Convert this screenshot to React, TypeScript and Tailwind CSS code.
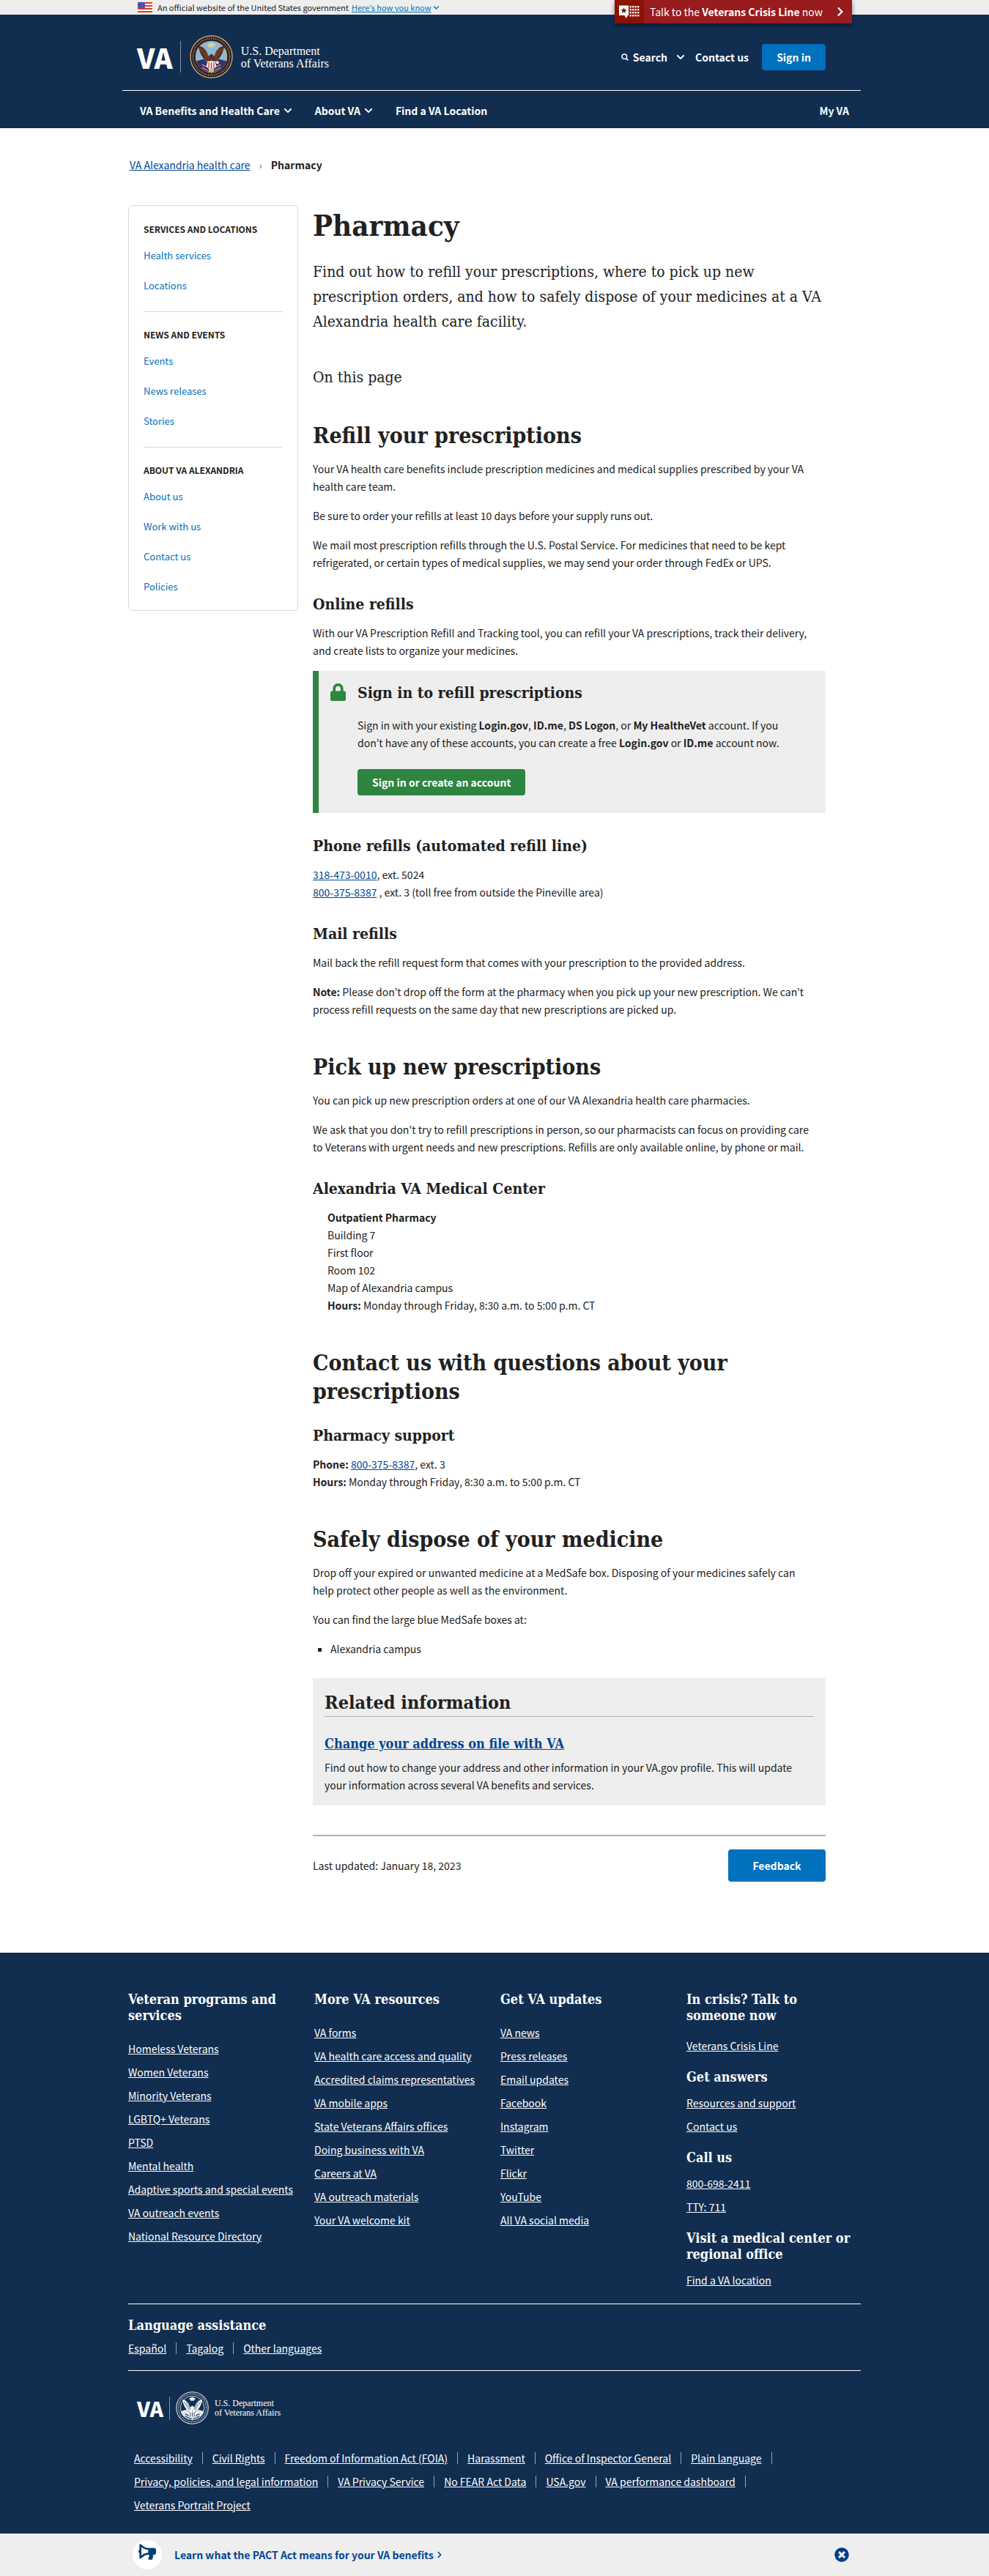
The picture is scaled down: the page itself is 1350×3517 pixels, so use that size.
import type { ReactNode } from "react";
import { FaLock, FaBullhorn, FaTimesCircle, FaChevronRight, FaChevronDown } from "react-icons/fa";

const SLAB = "font-['DejaVu_Serif_Condensed','DejaVu_Serif',serif]";

function P({ children, className = "" }: { children: ReactNode; className?: string }) {
  return <p className={`pr-4 text-sm leading-6 ${className}`}>{children}</p>;
}

function H2({ children }: { children: ReactNode }) {
  return (
    <h2 className={`mt-[47px] mb-[14px] text-[30px] leading-[39px] font-bold text-[#212121] ${SLAB}`}>
      {children}
    </h2>
  );
}

function H3({ children, tight = false }: { children: ReactNode; tight?: boolean }) {
  return (
    <h3
      className={`${tight ? "mt-7" : "mt-8"} mb-[14px] text-[21px] leading-[26px] font-bold text-[#212121] ${SLAB}`}
    >
      {children}
    </h3>
  );
}

function BodyLink({ children }: { children: ReactNode }) {
  return (
    <a href="#" className="text-[#004795] underline">
      {children}
    </a>
  );
}

function Flag() {
  return (
    <svg viewBox="0 0 20 14" className="h-[14px] w-5" aria-hidden="true">
      <rect width="20" height="14" fill="#fff" />
      {[0, 4, 8, 12].map((y) => (
        <rect key={y} y={y} width="20" height="2" fill="#db3e1f" />
      ))}
      <rect width="10" height="8" fill="#3b3fae" />
      {[1.5, 4, 6.5].map((y) =>
        [1.5, 4, 6.5, 9].map((x) => <circle key={`${x}-${y}`} cx={x} cy={y} r="0.6" fill="#b9bdf0" />)
      )}
    </svg>
  );
}

function Seal({ mono = false, className }: { mono?: boolean; className: string }) {
  const navy = "#112e51";
  const gold = mono ? "#dfe6ee" : "#d9a066";
  return (
    <svg viewBox="0 0 60 60" className={className} aria-hidden="true">
      <circle cx="30" cy="30" r="29" fill={mono ? navy : "#1b1c2b"} stroke={gold} strokeWidth="1.4" />
      <circle
        cx="30"
        cy="30"
        r="25.4"
        fill="none"
        stroke={mono ? "#b9c5d4" : "#a98158"}
        strokeWidth="2.6"
        strokeDasharray="1.2 1.5"
      />
      <circle cx="30" cy="30" r="21.6" fill={mono ? navy : "#8fb9d8"} stroke={gold} strokeWidth="1.2" />
      <path d="M9 36 L20 33 L27 41 L26 51 C18 50 11 44 9 36Z" fill={mono ? "#dfe6ee" : "#2c3565"} />
      <path d="M51 36 L40 33 L33 41 L34 51 C42 50 49 44 51 36Z" fill={mono ? "#dfe6ee" : "#2c3565"} />
      <path
        d="M17 41 L26 45 M17 45 L25 49 M43 41 L34 45 M43 45 L35 49"
        stroke={mono ? navy : "#e0707a"}
        strokeWidth="1.6"
      />
      <path
        d="M12 15 C14 27 19 35 28 38 L30 34 L32 38 C41 35 46 27 48 15 C45 15 40 17 37 22 L34 29 L30 26 L26 29 L23 22 C20 17 15 15 12 15Z"
        fill={mono ? "#fff" : "#5b2f1f"}
      />
      <path
        d="M15 19 L25 34 M19 19 L27 33 M45 19 L35 34 M41 19 L33 33"
        stroke={mono ? navy : "#8d5433"}
        strokeWidth="1"
      />
      <path d="M25 36 L35 36 L37 43 L30 51 L23 43Z" fill={mono ? "#fff" : "#f0ebe6"} />
      <path d="M26.5 38 V46 M30 38 V50 M33.5 38 V46" stroke={mono ? navy : "#c5313a"} strokeWidth="1.2" />
      <path d="M28 46 L30 54 L33 46Z" fill={mono ? "#dfe6ee" : "#e0b35d"} />
      <path d="M24 13 L30 10 L36 13 L33 17 H27Z" fill={mono ? "#dfe6ee" : "#cfd39a"} />
      <circle cx="38.5" cy="38" r="2" fill="#fff" />
    </svg>
  );
}

function CrisisIcon() {
  return (
    <svg viewBox="0 0 29 18" className="h-[18px] w-[29px]" aria-hidden="true">
      <path d="M1 0.5 H14 V14 H13 L10.5 18 L8.5 14 H1 Z" fill="#fff" />
      <path
        d="M7.5 3 L8.7 6 H11.8 L9.3 8 L10.2 11 L7.5 9.2 L4.8 11 L5.7 8 L3.2 6 H6.3 Z"
        fill="#7a1206"
      />
      {[1, 5, 9, 13].map((y) =>
        [15.5, 19, 22.5, 26].map((x) => (
          <rect key={`${x}-${y}`} x={x} y={y} width="2.4" height="2.4" rx="0.6" fill="#fff" />
        ))
      )}
    </svg>
  );
}

function SearchIcon() {
  return (
    <svg viewBox="0 0 10 10" className="h-[10px] w-[10px]" fill="none" stroke="currentColor" aria-hidden="true">
      <circle cx="4.3" cy="4.3" r="3.3" strokeWidth="1.5" />
      <path d="M6.8 6.8 L9.4 9.4" strokeWidth="1.7" />
    </svg>
  );
}

const sideGroups = [
  { title: "Services and locations", links: ["Health services", "Locations"] },
  { title: "News and events", links: ["Events", "News releases", "Stories"] },
  { title: "About VA Alexandria", links: ["About us", "Work with us", "Contact us", "Policies"] },
];

const footerCols = [
  {
    title: "Veteran programs and services",
    links: [
      "Homeless Veterans",
      "Women Veterans",
      "Minority Veterans",
      "LGBTQ+ Veterans",
      "PTSD",
      "Mental health",
      "Adaptive sports and special events",
      "VA outreach events",
      "National Resource Directory",
    ],
  },
  {
    title: "More VA resources",
    links: [
      "VA forms",
      "VA health care access and quality",
      "Accredited claims representatives",
      "VA mobile apps",
      "State Veterans Affairs offices",
      "Doing business with VA",
      "Careers at VA",
      "VA outreach materials",
      "Your VA welcome kit",
    ],
  },
  {
    title: "Get VA updates",
    links: [
      "VA news",
      "Press releases",
      "Email updates",
      "Facebook",
      "Instagram",
      "Twitter",
      "Flickr",
      "YouTube",
      "All VA social media",
    ],
  },
];

const contactGroups = [
  { title: "Get answers", links: ["Resources and support", "Contact us"] },
  { title: "Call us", links: ["800-698-2411", "TTY: 711"] },
  { title: "Visit a medical center or regional office", links: ["Find a VA location"] },
];

const languages = ["Español", "Tagalog", "Other languages"];

const legal = [
  "Accessibility",
  "Civil Rights",
  "Freedom of Information Act (FOIA)",
  "Harassment",
  "Office of Inspector General",
  "Plain language",
  "Privacy, policies, and legal information",
  "VA Privacy Service",
  "No FEAR Act Data",
  "USA.gov",
  "VA performance dashboard",
  "Veterans Portrait Project",
];

function FooterHeading({ children }: { children: ReactNode }) {
  return <h2 className={`pr-2 text-[18px] leading-[22px] font-bold text-white ${SLAB}`}>{children}</h2>;
}

function FooterLinks({ links }: { links: string[] }) {
  return (
    <ul className="flex flex-col gap-2">
      {links.map((l) => (
        <li key={l} className="text-sm leading-6 whitespace-nowrap">
          <a href="#" className="underline">
            {l}
          </a>
        </li>
      ))}
    </ul>
  );
}

function PipeList({ links }: { links: string[] }) {
  return (
    <ul className="flex flex-wrap gap-y-2">
      {links.map((l, i) => (
        <li key={l} className="flex items-center text-sm leading-6">
          <a href="#" className="underline">
            {l}
          </a>
          {i < links.length - 1 && <span className="mx-[13px] h-4 w-px bg-[#8ba6ca]" />}
        </li>
      ))}
    </ul>
  );
}

export default function App() {
  return (
    <div className="min-h-screen bg-white font-['Noto_Sans_CJK_KR',sans-serif] text-[#212121]">
      <div className="bg-[#eeeeee]">
        <div className="relative mx-auto flex h-5 max-w-[1000px] items-center pl-[13px] text-[11px] leading-5">
          <Flag />
          <span className="ml-[7px]">An official website of the United States government</span>
          <button className="ml-1 flex items-center text-[#0071bc] underline">
            Here’s how you know <FaChevronDown className="ml-[2px] h-[9px] w-[9px]" />
          </button>
          <a
            href="#"
            className="absolute top-0 right-3 flex h-8 items-center bg-[#981b1e] text-sm text-white shadow-[0_3px_6px_rgba(0,0,0,0.45)]"
          >
            <span className="flex h-full w-10 items-center justify-center bg-[#8b1303]">
              <CrisisIcon />
            </span>
            <span className="ml-2">
              Talk to the <b>Veterans Crisis Line</b> now
            </span>
            <FaChevronRight className="mr-[10px] ml-[18px] h-[14px] w-3" />
          </a>
        </div>
      </div>

      <header className="bg-[#112e51] text-white">
        <div className="mx-auto max-w-[1000px]">
          <div className="-ml-2 border-b border-white">
            <div className="flex h-[103px] items-center justify-between pt-3 pr-12 pl-5">
              <a href="#" className="flex items-center">
                <span className="text-[38px] leading-[44px] font-black">VA</span>
                <span className="ml-[10px] h-[43px] w-px bg-[#7d93b0]" />
                <Seal className="ml-[12px] h-[59px] w-[59px]" />
                <span className="ml-[11px] font-['Liberation_Serif',serif] text-[16px] leading-[17px]">
                  U.S. Department
                  <br />
                  of Veterans Affairs
                </span>
              </a>
              <div className="flex items-center text-sm font-bold">
                <button className="flex items-center gap-[6px]">
                  <SearchIcon />
                  <span>Search</span>
                  <FaChevronDown className="ml-[6px] h-3 w-3" />
                </button>
                <a href="#" className="ml-[14px]">
                  Contact us
                </a>
                <button className="ml-[18px] h-9 w-[87px] rounded bg-[#0071bc]">Sign in</button>
              </div>
            </div>
          </div>
          <nav className="flex h-[51px] items-center px-4 pt-[2px] text-sm font-bold">
            <button className="flex items-center gap-[5px]">
              VA Benefits and Health Care <FaChevronDown className="h-3 w-3" />
            </button>
            <button className="ml-[31px] flex items-center gap-[5px]">
              About VA <FaChevronDown className="h-3 w-3" />
            </button>
            <a href="#" className="ml-[31px]">
              Find a VA Location
            </a>
            <a href="#" className="ml-auto">
              My VA
            </a>
          </nav>
        </div>
      </header>

      <div className="mx-auto max-w-[1000px]">
        <nav aria-label="Breadcrumb" className="flex items-center pt-[38px] pl-[2px] text-sm leading-6">
          <BodyLink>VA Alexandria health care</BodyLink>
          <span className="mx-3 text-[#5b616b]">›</span>
          <span className="font-bold">Pharmacy</span>
        </nav>

        <div className="mt-[43px] flex items-start">
          <nav
            aria-label="Section"
            className="w-[232px] shrink-0 rounded-md border border-[#d6d7d9] px-5 pt-5 pb-5"
          >
            {sideGroups.map((g, i) => (
              <section key={g.title} className={i > 0 ? "mt-[23px] border-t border-[#d6d7d9] pt-[19px]" : ""}>
                <h2 className="text-[12px] leading-6 font-bold uppercase">{g.title}</h2>
                <ul className="mt-3 flex flex-col gap-[17px]">
                  {g.links.map((l) => (
                    <li key={l} className="text-[13px] leading-6">
                      <a href="#" className="text-[#0071bc]">
                        {l}
                      </a>
                    </li>
                  ))}
                </ul>
              </section>
            ))}
          </nav>

          <main className="mr-12 ml-5 min-w-0 flex-1 pt-[2px]">
            <h1 className={`text-[40px] leading-[52px] font-bold ${SLAB}`}>Pharmacy</h1>
            <p className={`mt-5 text-[21px] leading-[34px] ${SLAB}`}>
              Find out how to refill your prescriptions, where to pick up new prescription orders, and how to
              safely dispose of your medicines at a VA Alexandria health care facility.
            </p>
            <p className={`mt-[42px] -mb-1 text-[21px] leading-[34px] ${SLAB}`}>On this page</p>

            <H2>Refill your prescriptions</H2>
            <P>
              Your VA health care benefits include prescription medicines and medical supplies prescribed by your
              VA health care team.
            </P>
            <P className="mt-4">Be sure to order your refills at least 10 days before your supply runs out.</P>
            <P className="mt-4">
              We mail most prescription refills through the U.S. Postal Service. For medicines that need to be kept
              refrigerated, or certain types of medical supplies, we may send your order through FedEx or UPS.
            </P>

            <H3>Online refills</H3>
            <P>
              With our VA Prescription Refill and Tracking tool, you can refill your VA prescriptions, track their
              delivery, and create lists to organize your medicines.
            </P>

            <div className="mt-4 flex border-l-8 border-[#2e8540] bg-[#eeeeee] pt-[17px] pr-6 pb-6 pl-4">
              <FaLock className="h-6 w-[21px] shrink-0 text-[#2e8540]" />
              <div className="ml-4">
                <h3 className={`mb-[19px] text-[21px] leading-[26px] font-bold ${SLAB}`}>
                  Sign in to refill prescriptions
                </h3>
                <P>
                  Sign in with your existing <b>Login.gov</b>, <b>ID.me</b>, <b>DS Logon</b>, or{" "}
                  <b>My HealtheVet</b> account. If you don’t have any of these accounts, you can create a free{" "}
                  <b>Login.gov</b> or <b>ID.me</b> account now.
                </P>
                <button className="mt-6 h-9 rounded bg-[#2e8540] px-5 text-sm font-bold text-white">
                  Sign in or create an account
                </button>
              </div>
            </div>

            <H3>Phone refills (automated refill line)</H3>
            <P>
              <BodyLink>318-473-0010</BodyLink>, ext. 5024
              <br />
              <BodyLink>800-375-8387</BodyLink> , ext. 3 (toll free from outside the Pineville area)
            </P>

            <H3>Mail refills</H3>
            <P>Mail back the refill request form that comes with your prescription to the provided address.</P>
            <P className="mt-4">
              <b>Note:</b> Please don’t drop off the form at the pharmacy when you pick up your new prescription. We
              can’t process refill requests on the same day that new prescriptions are picked up.
            </P>

            <H2>Pick up new prescriptions</H2>
            <P>You can pick up new prescription orders at one of our VA Alexandria health care pharmacies.</P>
            <P className="mt-4">
              We ask that you don't try to refill prescriptions in person, so our pharmacists can focus on providing
              care to Veterans with urgent needs and new prescriptions. Refills are only available online, by phone
              or mail.
            </P>

            <H3>Alexandria VA Medical Center</H3>
            <div className="pl-5 text-sm leading-6">
              <b>Outpatient Pharmacy</b>
              <p>Building 7</p>
              <p>First floor</p>
              <p>Room 102</p>
              <p>Map of Alexandria campus</p>
              <p>
                <b>Hours:</b> Monday through Friday, 8:30 a.m. to 5:00 p.m. CT
              </p>
            </div>

            <H2>Contact us with questions about your prescriptions</H2>
            <H3 tight>Pharmacy support</H3>
            <P>
              <b>Phone:</b> <BodyLink>800-375-8387</BodyLink>, ext. 3
              <br />
              <b>Hours:</b> Monday through Friday, 8:30 a.m. to 5:00 p.m. CT
            </P>

            <H2>Safely dispose of your medicine</H2>
            <P>
              Drop off your expired or unwanted medicine at a MedSafe box. Disposing of your medicines safely can
              help protect other people as well as the environment.
            </P>
            <P className="mt-4">You can find the large blue MedSafe boxes at:</P>
            <ul className="mt-4 list-[square] pl-6 text-sm leading-6">
              <li>Alexandria campus</li>
            </ul>

            <section className="mt-7 bg-[#eeeeee] px-4 pt-[18px] pb-4">
              <h2 className={`border-b border-[#aeb0b5] pb-[2px] text-[25px] leading-[32px] font-bold ${SLAB}`}>
                Related information
              </h2>
              <h3 className={`mt-[25px] mb-2 text-[18px] leading-6 font-bold ${SLAB}`}>
                <BodyLink>Change your address on file with VA</BodyLink>
              </h3>
              <P>
                Find out how to change your address and other information in your VA.gov profile. This will update
                your information across several VA benefits and services.
              </P>
            </section>

            <div className="mt-10 mb-[97px] flex items-center justify-between border-t-2 border-[#aeb0b5] pt-[18px]">
              <P>Last updated: January 18, 2023</P>
              <button className="h-11 w-[133px] rounded bg-[#0071bc] text-sm font-bold text-white">Feedback</button>
            </div>
          </main>
        </div>
      </div>

      <footer className="bg-[#112e51] text-white">
        <div className="mx-auto max-w-[1000px] pt-[53px] pb-[27px]">
          <div className="grid grid-cols-4 gap-x-4">
            {footerCols.map((c) => (
              <section key={c.title} className="flex flex-col gap-[22px]">
                <FooterHeading>{c.title}</FooterHeading>
                <FooterLinks links={c.links} />
              </section>
            ))}
            <div className="flex flex-col gap-5">
              <section className="flex flex-col gap-[18px]">
                <FooterHeading>In crisis? Talk to someone now</FooterHeading>
                <FooterLinks links={["Veterans Crisis Line"]} />
              </section>
              {contactGroups.map((g) => (
                <section key={g.title} className="flex flex-col gap-3">
                  <FooterHeading>{g.title}</FooterHeading>
                  <FooterLinks links={g.links} />
                </section>
              ))}
            </div>
          </div>

          <section className="mt-5 border-y border-white pt-[18px] pb-[18px]">
            <FooterHeading>Language assistance</FooterHeading>
            <div className="mt-2">
              <PipeList links={languages} />
            </div>
          </section>

          <a href="#" className="mt-7 ml-3 flex items-center">
            <span className="text-[28px] leading-[32px] font-black">VA</span>
            <span className="ml-2 h-8 w-px bg-[#7d93b0]" />
            <Seal mono className="ml-2 h-[45px] w-[45px]" />
            <span className="ml-2 font-['Liberation_Serif',serif] text-[12px] leading-[13px]">
              U.S. Department
              <br />
              of Veterans Affairs
            </span>
          </a>

          <div className="mt-[34px] px-2">
            <PipeList links={legal} />
          </div>
        </div>
      </footer>

      <aside className="bg-[#eeeeee]">
        <div className="mx-auto flex h-[58px] max-w-[1000px] items-center pr-4 pl-[6px]">
          <span className="flex h-10 w-10 items-center justify-center rounded-full bg-white text-[#003e73]">
            <FaBullhorn className="mb-2 h-6 w-6 -scale-x-100" />
          </span>
          <a href="#" className="ml-[17px] flex items-center gap-1 text-sm font-bold text-[#004795]">
            Learn what the PACT Act means for your VA benefits <FaChevronRight className="h-[10px] w-2" />
          </a>
          <button aria-label="Close" className="ml-auto text-[#003e87]">
            <FaTimesCircle className="h-5 w-5" />
          </button>
        </div>
      </aside>
    </div>
  );
}
